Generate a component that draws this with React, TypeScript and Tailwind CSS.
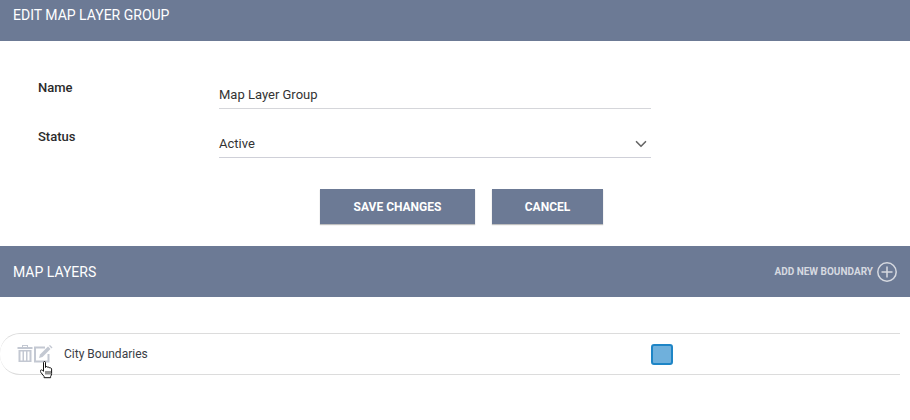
import { ChevronDown } from "lucide-react";

function SectionBar({ title, className, children }: { title: string; className: string; children?: React.ReactNode }) {
  return (
    <div className={`flex w-full justify-between bg-[#6c7a95] pl-[13px] pr-[13px] text-white ${className}`}>
      <h2 className="text-[14px] leading-[20px] font-normal">{title}</h2>
      {children}
    </div>
  );
}

function TrashIcon() {
  return (
    <svg width="16" height="18" viewBox="0 0 16 18" fill="#c3c8d2">
      <rect x="5.5" y="0.5" width="5" height="2" fill="none" stroke="#c3c8d2" />
      <rect x="0.5" y="2" width="15" height="2" />
      <path d="M1.5 5h13v12h-13z M3.5 6.5v9h2v-9z M7 6.5v9h2v-9z M10.5 6.5v9h2v-9z" fillRule="evenodd" />
    </svg>
  );
}

function EditIcon() {
  return (
    <svg width="19" height="18" viewBox="0 0 19 18" fill="none">
      <path d="M14.5 9v7.5h-13.5v-14h10" stroke="#c3c8d2" strokeWidth="2" />
      <path d="M5 13l1-3.500 8-8 2.500 2.500-8 8z" fill="#c3c8d2" />
      <path d="M15 .8l1-.8 2.500 2.500-1 1z" fill="#c3c8d2" />
    </svg>
  );
}

function HandCursor() {
  return (
    <svg width="14" height="18" viewBox="0 0 14 18">
      <path
        d="M3.500 1.500c0-1.300 2-1.300 2 0v5l.5-.8c1-.4 1.700 0 1.800.7.800-.5 1.700-.2 1.900.6.900-.4 1.900 0 1.900 1.100v4.400c0 1.300-.5 2-1 3v1.200h-6.500v-1.200l-3.300-4.200c-.8-1.200-.5-2 .2-2.300.6-.2 1.200 0 2.500 1.300z"
        fill="#fff"
        stroke="#111"
        strokeWidth="1"
        strokeLinejoin="round"
      />
      <path d="M6 10v3.500M8 10v3.500M10 10v3.500" stroke="#111" strokeWidth="0.9" />
    </svg>
  );
}

export default function App() {
  return (
    <div className="h-[420px] w-[910px] overflow-hidden bg-white font-['Roboto',sans-serif]">
      <SectionBar title="EDIT MAP LAYER GROUP" className="h-[41px] pt-[5px]" />

      <form className="flex flex-col">
        <div className="mt-[39px] flex h-[29px]">
          <label className="w-[219px] pl-[38px] text-[13px] leading-[16px] font-medium text-[#2b2b2b]">Name</label>
          <div className="w-[432px] border-b border-[#d5d6da] pt-[7px] text-[13px] leading-[16px] text-[#333]">
            Map Layer Group
          </div>
        </div>
        <div className="mt-[20px] flex h-[29px]">
          <label className="w-[219px] pl-[38px] text-[13px] leading-[16px] font-medium text-[#2b2b2b]">Status</label>
          <div className="flex w-[432px] items-start justify-between border-b border-[#cfd0d8] pt-[7px] text-[13px] leading-[16px] text-[#333]">
            Active
            <ChevronDown className="mt-[-1px] mr-[1px] h-[18px] w-[18px] text-[#666]" strokeWidth={2.2} />
          </div>
        </div>
        <div className="mt-[31px] flex pl-[320px] gap-[17px]">
          <button type="button" className="h-[35px] w-[155px] bg-[#6c7a95] text-[12px] font-bold text-white shadow-[0_1px_1px_rgba(0,0,0,0.25)]">
            SAVE CHANGES
          </button>
          <button type="button" className="h-[35px] w-[111px] bg-[#6c7a95] text-[12px] font-bold text-white shadow-[0_1px_1px_rgba(0,0,0,0.25)]">
            CANCEL
          </button>
        </div>
      </form>

      <SectionBar title="MAP LAYERS" className="mt-[22px] h-[51px] items-center">
        <div className="flex items-center gap-[4px] text-[#d6d9e0]">
          <span className="text-[10px] font-bold">ADD NEW BOUNDARY</span>
          <svg width="20" height="20" viewBox="0 0 20 20" fill="none" stroke="#d6d9e0" strokeWidth="1.500">
            <circle cx="10" cy="10" r="9.200" />
            <path d="M10 4.500v11M4.500 10h11" />
          </svg>
        </div>
      </SectionBar>

      <div className="mt-[36px] flex h-[42px] w-[900px] items-center rounded-l-[20px] border-y border-[#dcdcdc]">
        <div className="relative ml-[17px] flex items-center gap-px">
          <TrashIcon />
          <EditIcon />
          <div className="absolute left-[23px] top-[16px]">
            <HandCursor />
          </div>
        </div>
        <span className="ml-[11px] w-[587px] text-[12px] text-[#3a3d45]">City Boundaries</span>
        <div className="h-[21px] w-[22px] rounded-[3px] border-2 border-[#1e85c6] bg-[#6fb0dc]" />
      </div>
    </div>
  );
}
